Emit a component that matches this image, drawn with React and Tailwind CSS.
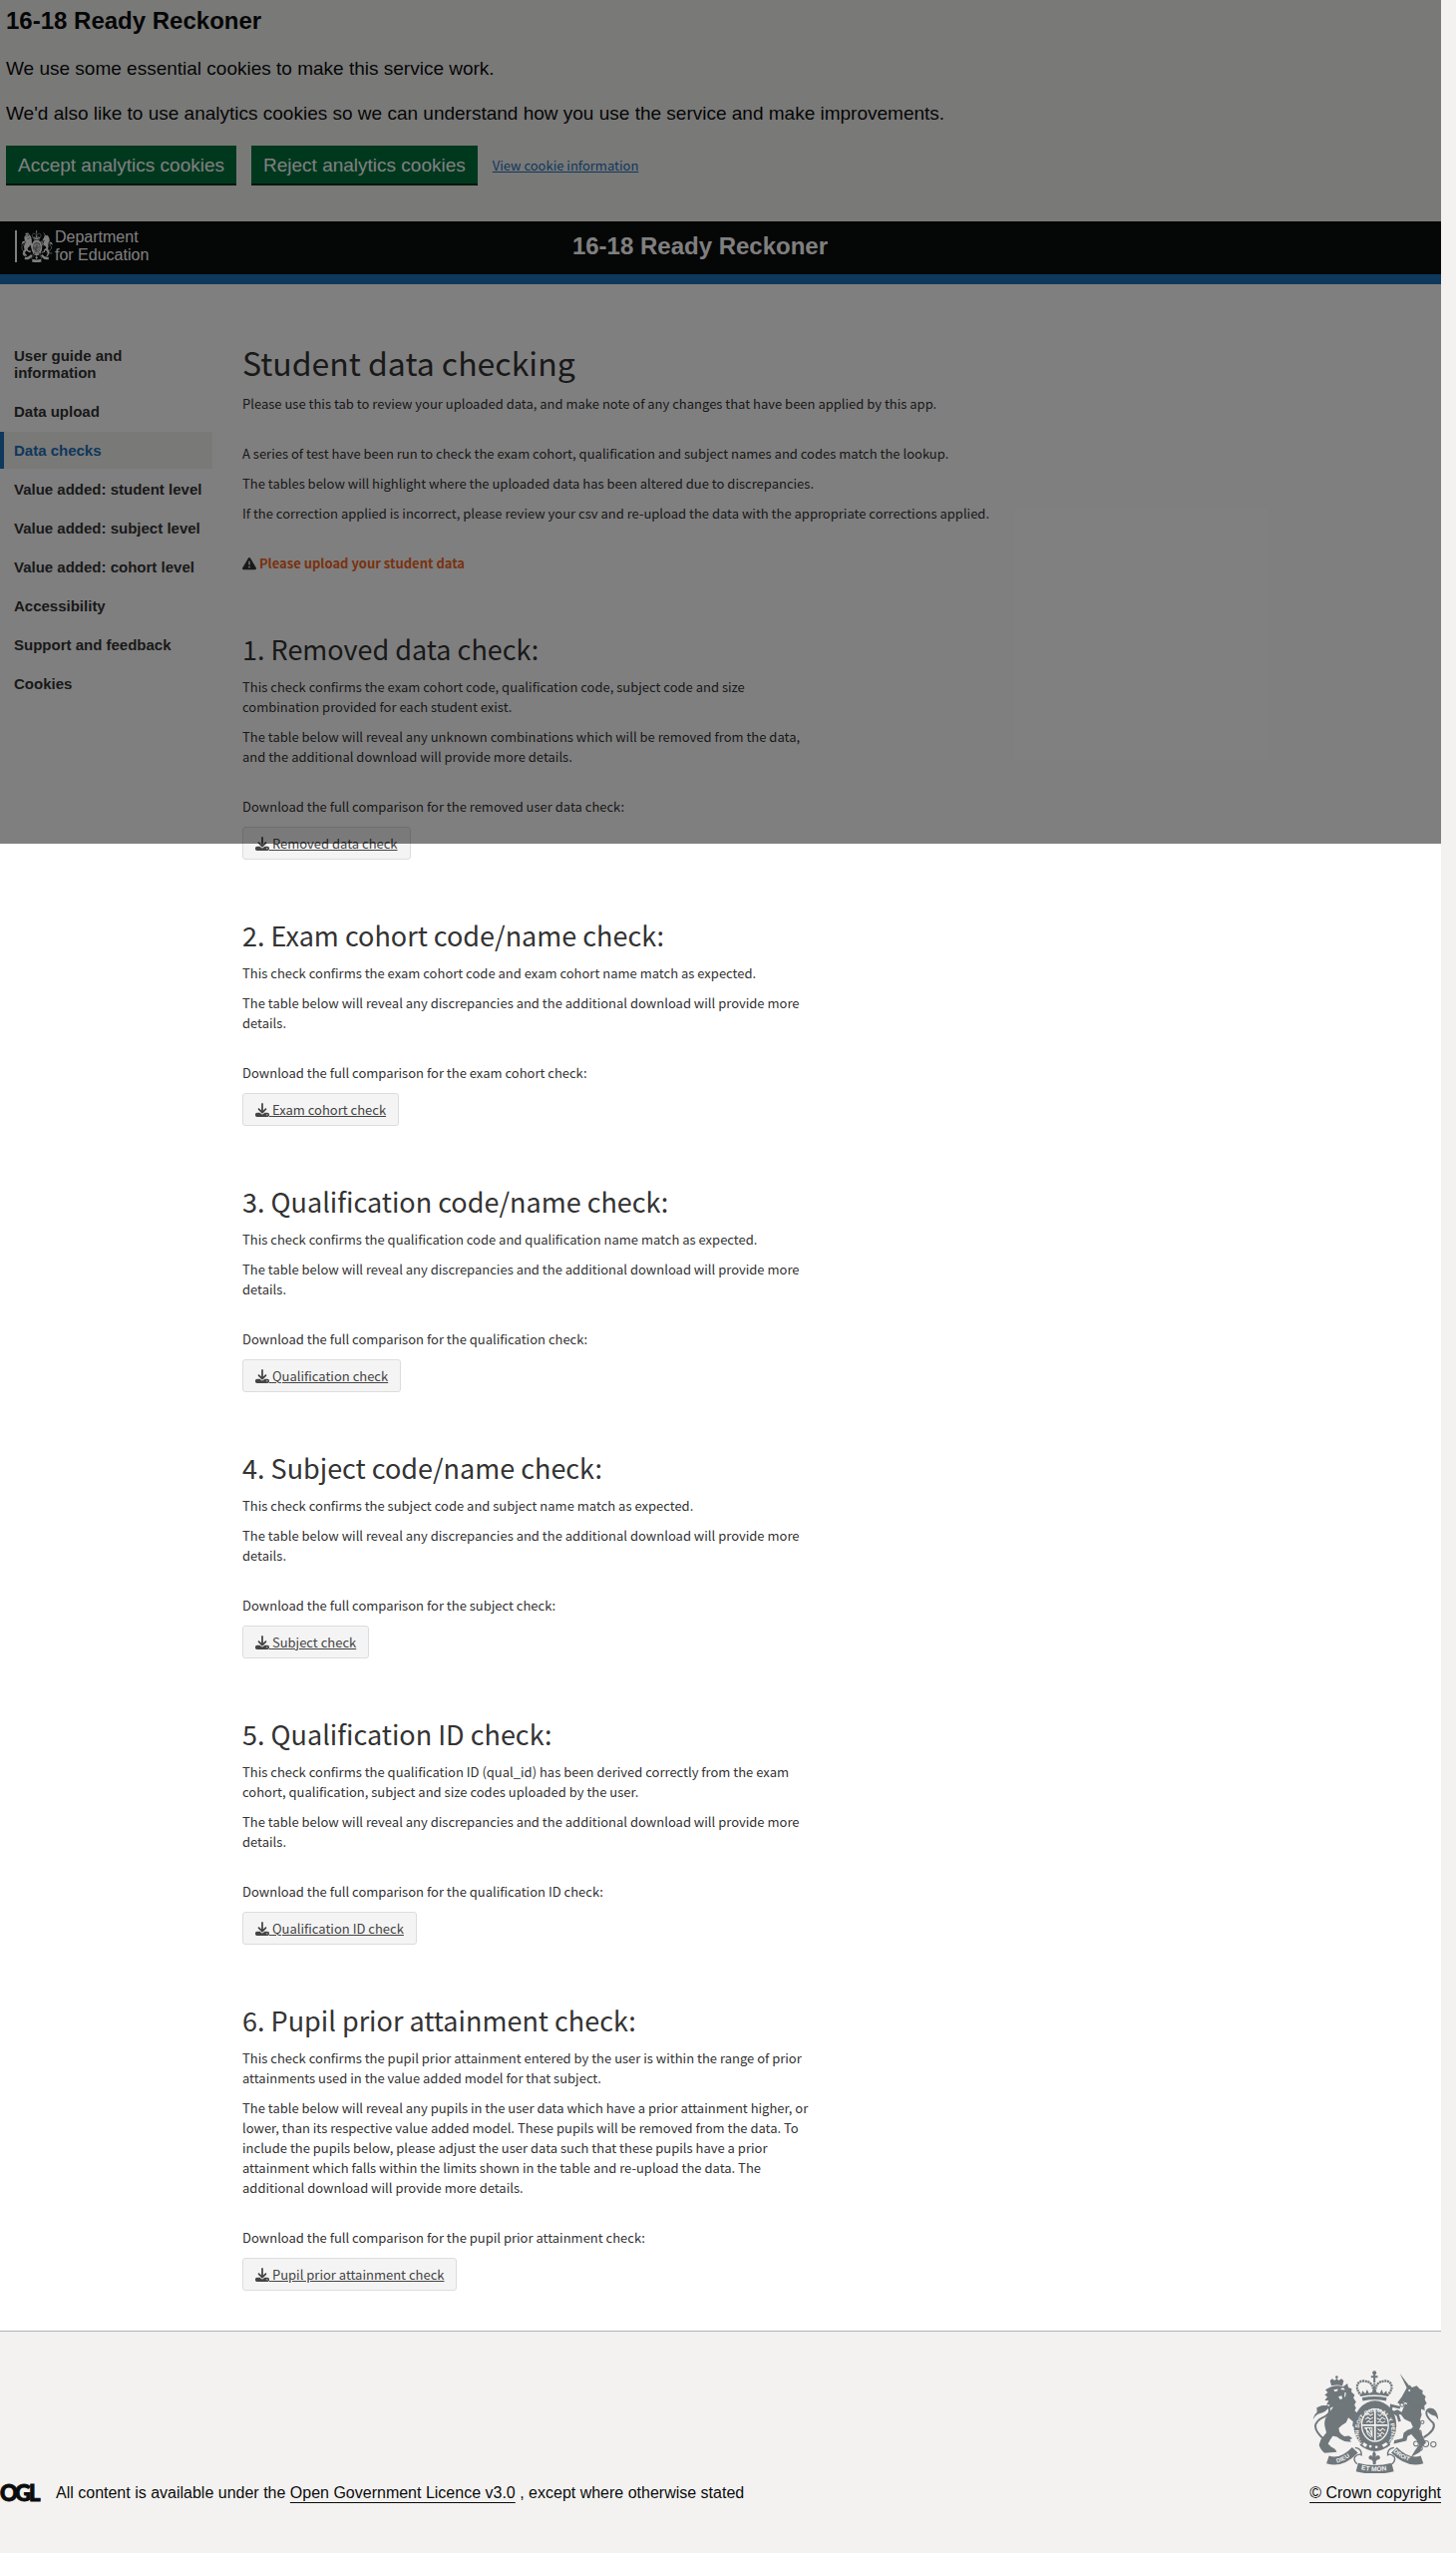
import React from "react";
import { FaDownload, FaTriangleExclamation } from "react-icons/fa6";

const navItems = [
  "User guide and information",
  "Data upload",
  "Data checks",
  "Value added: student level",
  "Value added: subject level",
  "Value added: cohort level",
  "Accessibility",
  "Support and feedback",
  "Cookies",
];

const discrepancies =
  "The table below will reveal any discrepancies and the additional download will provide more details.";

const checks = [
  {
    title: "1. Removed data check:",
    intro:
      "This check confirms the exam cohort code, qualification code, subject code and size combination provided for each student exist.",
    detail:
      "The table below will reveal any unknown combinations which will be removed from the data, and the additional download will provide more details.",
    download: "Download the full comparison for the removed user data check:",
    button: "Removed data check",
  },
  {
    title: "2. Exam cohort code/name check:",
    intro: "This check confirms the exam cohort code and exam cohort name match as expected.",
    detail: discrepancies,
    download: "Download the full comparison for the exam cohort check:",
    button: "Exam cohort check",
  },
  {
    title: "3. Qualification code/name check:",
    intro: "This check confirms the qualification code and qualification name match as expected.",
    detail: discrepancies,
    download: "Download the full comparison for the qualification check:",
    button: "Qualification check",
  },
  {
    title: "4. Subject code/name check:",
    intro: "This check confirms the subject code and subject name match as expected.",
    detail: discrepancies,
    download: "Download the full comparison for the subject check:",
    button: "Subject check",
  },
  {
    title: "5. Qualification ID check:",
    intro:
      "This check confirms the qualification ID (qual_id) has been derived correctly from the exam cohort, qualification, subject and size codes uploaded by the user.",
    detail: discrepancies,
    download: "Download the full comparison for the qualification ID check:",
    button: "Qualification ID check",
  },
  {
    title: "6. Pupil prior attainment check:",
    intro:
      "This check confirms the pupil prior attainment entered by the user is within the range of prior attainments used in the value added model for that subject.",
    detail:
      "The table below will reveal any pupils in the user data which have a prior attainment higher, or lower, than its respective value added model. These pupils will be removed from the data. To include the pupils below, please adjust the user data such that these pupils have a prior attainment which falls within the limits shown in the table and re-upload the data. The additional download will provide more details.",
    download: "Download the full comparison for the pupil prior attainment check:",
    button: "Pupil prior attainment check",
  },
];

// Royal coat of arms: lion and unicorn either side of a crowned garter.
function Crest({ className, ground, motto }) {
  return (
    <svg
      viewBox="108 172 380 310"
      preserveAspectRatio="none"
      className={className}
      fill="currentColor"
      aria-hidden="true"
    >
      {/* crown */}
      <circle cx="294" cy="179" r="6" />
      <path d="M291 182h6v6h7v6h-7v10h-6v-10h-7v-6h7z" />
      <g fill="none" stroke="currentColor">
        <path
          d="M256 248C232 226 242 200 266 204C282 206 291 214 293 244M332 248C356 226 346 200 322 204C306 206 297 214 295 244"
          strokeWidth="7"
          strokeDasharray="6 2"
        />
        <path d="M294 202v42" strokeWidth="6" strokeDasharray="6 2" />
      </g>
      <path d="M254 250l4-17 9 9 5-13 6 12 10-4 6-13 6 13 10 4 6-12 5 13 9-9 4 17q-40-9-80 0z" />
      <path d="M257 254q37-8 74 0l-2 10q-35-8-70 0z" />
      {/* garter */}
      <ellipse cx="296" cy="338" rx="64" ry="75" />
      <ellipse cx="296" cy="337" rx="42" ry="51" fill={ground} />
      <ellipse cx="296" cy="337" rx="38" ry="47" />
      <g fill="none" stroke={ground} strokeWidth="3">
        <path d="M296 290v94M258 337h76" strokeWidth="5" />
        <path d="M268 308l8-6 6 6 8-5M267 319l8-6 6 6 9-5M270 329l7-5 6 5 7-4" />
        <path d="M304 303l7 6 6-7 7 7M302 316l9 5 6-7 11 6M303 329l8-4 7 5 9-5" />
        <path d="M265 345l25 27M271 345q-3 18 14 28M279 345l9 22M287 345v26M264 345h24" />
        <path d="M304 348l8 6 6-7 9 6M303 361l8 5 6-7 7 5M303 373l8-5 5 4" />
      </g>
      <path d="M257 384q38 34 78 0l7 13q-46 37-92 0z" />
      <g fill={ground}>
        <circle cx="282" cy="401" r="4" />
        <circle cx="300" cy="403" r="4" />
        <path d="M263 389l10 7-6 8-9-8zM316 397l13-8 6 6-13 9z" />
      </g>
      {/* lion */}
      <circle cx="181" cy="192" r="4" />
      <path d="M165 218l-4-15 6-6 8 5 6-6 6 6 8-5 7 6-4 15q-16-5-33 0z" />
      <path d="M163 222q18-7 38-2l12-9 3 12 10 4-1 10 10 9-4 9 8 12-5 9 5 9-4 8 11 10 7 18-2 15-10-8-3 17-10-5 2-14-14-12-7 15-12 8-10 9 2 11q6 10 15 14l14-2 10 8-8 4 5 6q-20 2-34-8q-10-10-22-9q-10 14-14 23l10 10q13 5 16 15l-36 3q-12-8-17-24l5-16 17-22-5-19q-2-13 2-23l24-36-14 6 3-12-10 1 7-13-12-1 8-10-8-6 9-8-7-8z" />
      <g fill={ground}>
        <path d="M172 230l13-2-2 6-8 2zM192 226l9-2 5 7-10-1zM186 251l10-3 2 9-7 2z" />
        <path d="M205 238l-1 14 3-1 2-12z" />
      </g>
      <g fill="none" stroke="currentColor">
        <path d="M143 380Q110 350 119 332Q127 318 146 311Q165 301 157 283Q147 276 133 290" strokeWidth="6" />
        <path d="M110 317q4-13 12-19l-1-14 14-6q17-3 22 7q-13 15-28 17q-8 1-18 16z" fill="currentColor" stroke="none" />
      </g>
      {/* unicorn */}
      <path d="M370 180l31 42-8 6z" />
      <path d="M376 252l14-26 10-10 7 7 14-5 9 10 9 4-1 10 10 8-3 9 6 12-7 7 1 15-10-5-2 11-44-15 4-14-12-3-9 7-9-5z" />
      <circle cx="399" cy="232" r="3" fill={ground} />
      <path d="M386 272l47 20 3 14-5 14q7 17-4 31l-13 9-20 10-4 14-38 9 2-10 25-6 3-17 12-9 17-5-8-18-19-9-10-14-14-2-8-8 11-5 13 8z" />
      <path d="M406 345l16-6 14 25 13 26-11 11-8 18-26 14 14-23 11-13-8-14-15-17z" />
      <g fill="none" stroke="currentColor">
        <path d="M371 284L345 278L343 293L364 306L370 326" strokeWidth="8" />
        <path d="M376 272l10-7 18 7 30 11" strokeWidth="5" strokeDasharray="5 3" />
        <path d="M442 374Q480 350 471 331Q455 317 451 306Q447 290 462 288" strokeWidth="6" />
        <g strokeWidth="3">
          <circle cx="377" cy="275" r="6" />
          <circle cx="438" cy="328" r="5" />
          <circle cx="427" cy="360" r="8" />
          <circle cx="419" cy="393" r="7" />
          <circle cx="431" cy="407" r="7" />
          <circle cx="448" cy="393" r="9" />
          <circle cx="471" cy="395" r="8" />
        </g>
      </g>
      <path d="M452 292q8-11 20-4 12 8 14 34-7-15-14-14-17-4-20-16z" />
      {/* motto ribbon */}
      <g fill="none" stroke="currentColor">
        <path d="M154 441Q195 455 236 412" strokeWidth="24" />
        <path d="M437 441Q396 455 353 412" strokeWidth="24" />
        <path d="M242 464Q295 478 349 464" strokeWidth="26" />
        <path d="M236 405q20 2 19 22q-8-6-20 6q-4 12 7 21M353 405q-20 2-19 22q8-6 20 6q4 12-7 21" strokeWidth="4" />
      </g>
      <path d="M293 415q9 9 4 18 9-10 14 0 1 8-8 8l-4 4-1 11h-8l-1-11-4-4q-9 0-8-8 6-10 13 0-5-9 3-18z" />
      {motto && (
        <g fill={ground} fontFamily="Liberation Sans" fontWeight="700" fontSize="18">
          <path id="crest-garter" d="M257 392A49 59 0 1 1 335 392" fill="none" />
          <path id="crest-left" d="M182 451Q210 443 238 419" fill="none" />
          <path id="crest-right" d="M350 417Q378 442 412 450" fill="none" />
          <path id="crest-foot" d="M254 471Q295 481 345 471" fill="none" />
          <text fontSize="17">
            <textPath href="#crest-garter">HONI SOIT QUI MAL Y PENSE</textPath>
          </text>
          <text>
            <textPath href="#crest-left">DIEU</textPath>
          </text>
          <text>
            <textPath href="#crest-right">DROIT</textPath>
          </text>
          <text fontSize="20">
            <textPath href="#crest-foot">ET MON</textPath>
          </text>
        </g>
      )}
    </svg>
  );
}

function OglLogo() {
  return (
    <svg
      viewBox="0 0 41 17"
      className="h-[17px] w-[41px] shrink-0 overflow-visible"
      role="img"
      aria-label="Open Government Licence"
    >
      <g fill="#0b0c0c" stroke="#0b0c0c" strokeWidth="1" fontFamily="Lato" fontWeight="900" fontSize="22">
        <text x="0" y="16">O</text>
        <text x="15" y="16">G</text>
        <text x="29" y="16">L</text>
      </g>
    </svg>
  );
}

function CookieBanner() {
  return (
    <section className="bg-[#f3f2f1] px-1.5 pb-9 font-['Liberation_Sans',sans-serif] text-[#0b0c0c]">
      <h2 className="pt-1.5 text-2xl leading-[30px] font-bold">16-18 Ready Reckoner</h2>
      <p className="mt-5 text-[19px] leading-[25px]">We use some essential cookies to make this service work.</p>
      <p className="mt-5 text-[19px] leading-[25px]">
        We'd also like to use analytics cookies so we can understand how you use the service and make improvements.
      </p>
      <div className="mt-5 flex items-center gap-[15px] text-[19px] leading-[19px]">
        <button type="button" className="h-10 border-b-2 border-[#002d18] bg-[#00703c] px-3 text-white">
          Accept analytics cookies
        </button>
        <button type="button" className="h-10 border-b-2 border-[#002d18] bg-[#00703c] px-3 text-white">
          Reject analytics cookies
        </button>
        <a
          href="#cookies"
          className="font-['Noto_Sans_CJK_SC',sans-serif] text-[13px] leading-5 text-[#1d70b8] underline"
        >
          View cookie information
        </a>
      </div>
    </section>
  );
}

function Header() {
  return (
    <header className="grid h-[63px] grid-cols-[1fr_auto_1fr] items-center border-b-10 border-[#1d70b8] bg-[#0b0c0c] pr-[56px] pb-[3px] pl-[15px] font-['Liberation_Sans',sans-serif] text-white">
      <a href="#home" className="flex items-center">
        <span className="mr-1 h-8 w-0.5 bg-white" />
        <Crest className="mr-0.5 h-8 w-8" ground="#0b0c0c" />
        <span className="text-base leading-[18px]">
          Department
          <br />
          for Education
        </span>
      </a>
      <span className="text-2xl leading-[30px] font-bold">16-18 Ready Reckoner</span>
    </header>
  );
}

function Sidebar() {
  return (
    <nav className="flex w-[213px] shrink-0 flex-col gap-0.5 pt-[53px] font-['Liberation_Sans',sans-serif] text-[15px] leading-[17px] font-bold text-[#333]">
      {navItems.map((item) => (
        <a
          key={item}
          href="#tab"
          className={
            item === "Data checks"
              ? "border-l-4 border-[#1d70b8] bg-[#f3f2f1] p-2.5 text-[#1d70b8]"
              : "border-l-4 border-transparent p-2.5"
          }
        >
          {item}
        </a>
      ))}
    </nav>
  );
}

function Check({ title, intro, detail, download, button }) {
  return (
    <section className="mt-[59px] max-w-[575px]">
      <h2 className="text-[27px] leading-[33px]">{title}</h2>
      <p className="mt-3">{intro}</p>
      <p className="mt-2.5">{detail}</p>
      <p className="mt-[30px]">{download}</p>
      <a
        href="#download"
        className="mt-2.5 block h-[33px] w-fit rounded-[3px] border border-[#ddd] bg-[#f4f4f4] px-3 leading-[31px] text-[#444] underline"
      >
        <FaDownload className="inline size-3.5 align-[-2px]" /> {button}
      </a>
    </section>
  );
}

function Footer() {
  return (
    <footer className="flex items-end justify-between gap-5 border-t border-[#b1b4b6] bg-[#f3f2f1] pt-[39px] pb-[50px] font-['Liberation_Sans',sans-serif] text-base leading-5 text-[#0b0c0c]">
      <div className="flex items-center gap-[15px]">
        <OglLogo />
        <span>
          All content is available under the{" "}
          <a href="#licence" className="underline underline-offset-4">
            Open Government Licence v3.0
          </a>{" "}
          , except where otherwise stated
        </span>
      </div>
      <a href="#copyright" className="flex flex-col items-center gap-2.5 underline underline-offset-4">
        <Crest className="h-[103px] w-[127px] text-[#6f777b]" ground="#f3f2f1" motto />
        © Crown copyright
      </a>
    </footer>
  );
}

export default function App() {
  return (
    <div className="min-h-screen bg-[#f3f2f1] pr-[15px]">
      <div className="relative bg-white">
        <CookieBanner />
        <Header />
        <div className="flex gap-[30px] pb-10">
          <Sidebar />
          <main className="min-w-0 flex-1 pt-[58px] font-['Noto_Sans_CJK_SC',sans-serif] text-[13px] leading-5 text-[#333]">
            <h1 className="text-[32px] leading-10">Student data checking</h1>
            <p className="mt-3">
              Please use this tab to review your uploaded data, and make note of any changes that have been applied by
              this app.
            </p>
            <p className="mt-[30px]">
              A series of test have been run to check the exam cohort, qualification and subject names and codes match
              the lookup.
            </p>
            <p className="mt-2.5">
              The tables below will highlight where the uploaded data has been altered due to discrepancies.
            </p>
            <p className="mt-2.5">
              If the correction applied is incorrect, please review your csv and re-upload the data with the
              appropriate corrections applied.
            </p>
            <p className="mt-[30px] font-bold text-[#f26522]">
              <FaTriangleExclamation className="inline size-3.5 align-[-2px] text-[#333]" /> Please upload your student
              data
            </p>
            {checks.map((check) => (
              <Check key={check.title} {...check} />
            ))}
          </main>
        </div>
        <Footer />
        <div className="pointer-events-none absolute inset-x-0 top-0 h-[846px] bg-black/50" />
      </div>
    </div>
  );
}
